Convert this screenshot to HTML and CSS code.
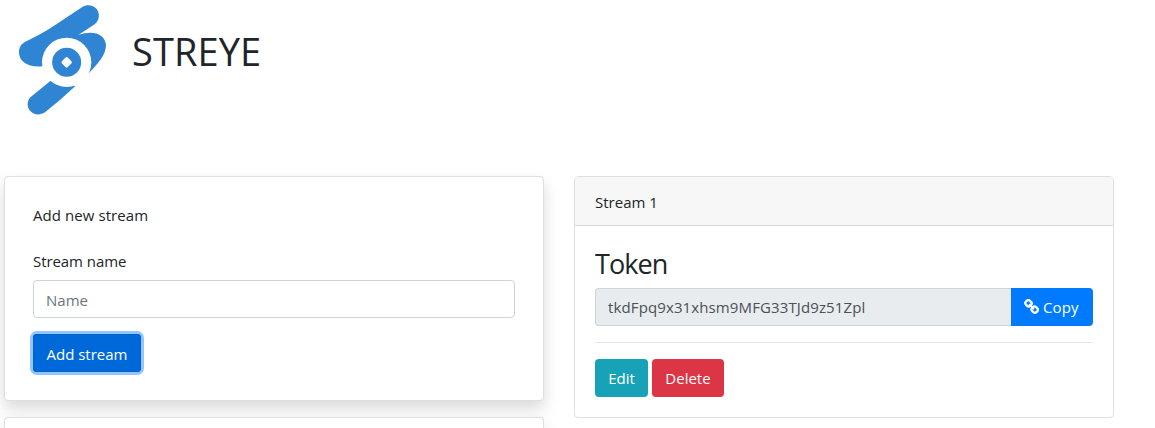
FILE: index.html
```html
<!DOCTYPE html>
<html lang="en">
<head>
<meta charset="utf-8">
<title>STREYE</title>
<link rel="stylesheet" href="styles.css">
</head>
<body>
<header class="brand">
  <svg class="logo" viewBox="0 0 420 360" aria-hidden="true">
    <path fill="#2f84d3" d="M76 125Q124 103 160 79L247 21C260 12 280 14 290 27C301 42 298 62 284 73L235 105C280 89 314 102 318 134C318 165 294 190 267 219L200 187L127 199C85 203 57 186 57 157C57 142 63 132 76 125Z"/>
    <path fill="#2f84d3" d="M152 242L93 290C80 302 80 320 91 333C102 346 121 346 135 337Q182 300 226 258Z"/>
    <circle cx="200" cy="187" r="74" fill="#fff"/>
    <circle cx="200" cy="187" r="43.500" fill="#2f84d3"/>
    <rect x="187.500" y="174.500" width="25" height="25" rx="5" fill="#fff" transform="rotate(45 200 187)"/>
  </svg>
  <h1 class="title">STREYE</h1>
</header>
<main class="columns">
  <section class="column">
    <form class="card card-form">
      <p class="form-title">Add new stream</p>
      <label class="label" for="name">Stream name</label>
      <input class="input" id="name" type="text" placeholder="Name">
      <button class="btn btn-primary btn-focus" type="button">Add stream</button>
    </form>
    <div class="card card-next"></div>
  </section>
  <section class="column">
    <article class="card">
      <div class="card-header">Stream 1</div>
      <div class="card-body">
        <h3 class="token-title">Token</h3>
        <div class="group">
          <input class="input input-token" type="text" value="tkdFpq9x31xhsm9MFG33TJd9z51Zpl" readonly>
          <button class="btn btn-copy" type="button">
            <svg class="link-icon" viewBox="0 0 15 15" aria-hidden="true">
              <g fill="none" stroke="#fff" stroke-width="2.300">
                <rect x="1.700" y="1.200" width="5.600" height="6.200" rx="2.600" transform="rotate(-45 4.500 4.300)"/>
                <rect x="7.900" y="7.500" width="5.600" height="6.200" rx="2.600" transform="rotate(-45 10.700 10.600)"/>
                <path d="M5.600 5.600L9.500 9.500" stroke-linecap="round" stroke-width="1.800"/>
              </g>
            </svg>
            <span>Copy</span>
          </button>
        </div>
        <hr class="rule">
        <div class="actions">
          <button class="btn btn-edit" type="button">Edit</button>
          <button class="btn btn-delete" type="button">Delete</button>
        </div>
      </div>
    </article>
  </section>
</main>
</body>
</html>
```
FILE: styles.css
```css
* { box-sizing: border-box; }
body {
  margin: 0;
  height: 428px;
  overflow: hidden;
  background: #fff;
  color: #212529;
  font: 15px/24px "Open Sans", "Noto Sans", sans-serif;
}
h1, h3, p { margin: 0; font-weight: 400; }
.brand { display: flex; height: 176px; }
.logo { width: 140px; height: 120px; margin-right: -8px; flex: none; }
.title { font-size: 38px; line-height: 48px; margin-top: 27px; letter-spacing: 0.1px; }
.columns { display: flex; gap: 30px; padding-left: 4px; align-items: flex-start; }
.column { width: 540px; display: flex; flex-direction: column; gap: 16px; }
.card { border: 1px solid #dfdfdf; border-radius: 4px; background: #fff; }
.card-form {
  height: 225px;
  padding: 26px 28px 28px;
  box-shadow: 0 8px 16px rgba(0, 0, 0, .15);
}
.card-next {
  height: 11px;
  border-bottom: 0;
  border-radius: 4px 4px 0 0;
  box-shadow: 0 8px 16px rgba(0, 0, 0, .15);
}
.form-title { margin-bottom: 22px; letter-spacing: 0.07px; }
.label { display: block; margin-bottom: 7px; letter-spacing: -0.07px; }
.input {
  display: block;
  width: 100%;
  height: 38px;
  padding: 2px 12px 0;
  border: 1px solid #ced4da;
  border-radius: 4px;
  background: #fff;
  color: #495057;
  font: inherit;
  outline: 0;
}
.input::placeholder { color: #6c757d; opacity: 1; }
.btn {
  height: 38px;
  padding: 0;
  border: 0;
  border-radius: 4px;
  color: #fff;
  font: inherit;
  white-space: nowrap;
}
.btn-primary { width: 108px; margin-top: 16px; padding-top: 2px; background: #0069d9; }
.btn-focus { box-shadow: inset 0 0 0 1px #0062cc, 0 0 0 3px #93c6ff; }
.card-header {
  height: 49px;
  padding: 13px 20px 0;
  border-bottom: 1px solid #dadada;
  border-radius: 3px 3px 0 0;
  background: #f7f7f7;
}
.card-body { padding: 20px; }
.token-title { height: 42px; font-size: 27px; line-height: 35px; letter-spacing: -0.9px; }
.group { display: flex; }
.input-token {
  flex: 1;
  padding-top: 0;
  border-right: 0;
  border-radius: 4px 0 0 4px;
  background: #e9ecef;
  letter-spacing: 0.12px;
}
.btn-copy {
  display: flex;
  align-items: center;
  gap: 4px;
  width: 82px;
  padding-left: 13px;
  border-radius: 0 4px 4px 0;
  background: #007bff;
  letter-spacing: 0.1px;
}
.link-icon { width: 15px; height: 15px; margin-top: -1px; }
.rule { margin: 16px 0; border: 0; border-top: 1px solid #e5e5e5; }
.actions { display: flex; gap: 4px; }
.btn-edit { width: 53px; background: #17a2b8; }
.btn-delete { width: 72px; background: #dc3545; }
```
